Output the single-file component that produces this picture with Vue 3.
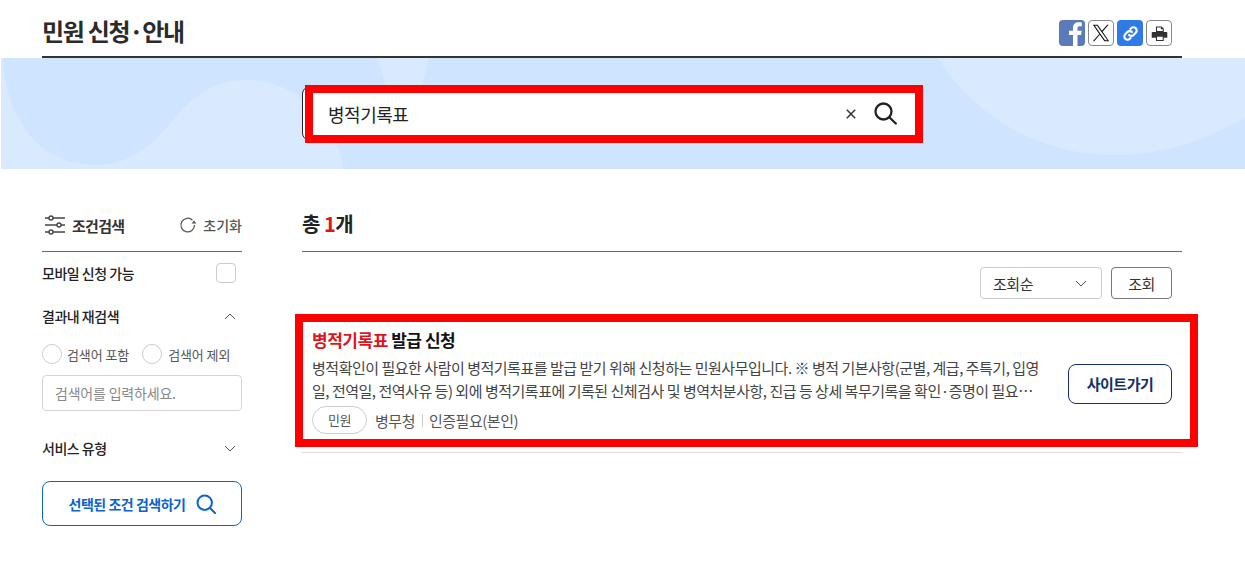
<template>
  <div class="page">
    <div class="head">
      <h1 class="page-title">민원 신청·안내</h1>
      <div class="share">
        <a class="share-btn fb">
          <svg viewBox="0 0 26 26"><path fill="#fff" d="M14 26V15h-4v-4.300h4V8c0-3.900 2.300-5.800 5.600-5.800 1.500 0 2.800.1 3.200.2v3.800h-2.200c-1.800 0-2.100.8-2.100 2.100v2.400h4.200l-.6 4.300h-3.600v11z"/></svg>
        </a>
        <a class="share-btn line">
          <svg viewBox="0 0 24 24"><path fill="#111" d="M13.900 10.500 21.200 2h-1.700l-6.400 7.400L8 2H2.200l7.700 11.200L2.200 22h1.700l6.700-7.800L16 22h5.800zm-2.400 2.700-.8-1.100L4.600 3.300h2.700l5 7.100.8 1.100 6.500 9.300h-2.700z"/></svg>
        </a>
        <a class="share-btn link">
          <svg class="small" viewBox="0 0 24 24" fill="none" stroke="#fff" stroke-width="3" stroke-linecap="round"><path d="M10 14a4.500 4.500 0 0 0 6.400 0l3-3a4.500 4.500 0 0 0-6.400-6.400l-1.200 1.200"/><path d="M14 10a4.500 4.500 0 0 0-6.400 0l-3 3a4.500 4.500 0 0 0 6.400 6.400l1.200-1.200"/></svg>
        </a>
        <a class="share-btn line">
          <svg class="small" viewBox="0 0 24 24"><path fill="#333" d="M7 2h8l3 3v5H7zm1.500 1.500v5h8V6H14V3.500zM2 10h20a1 1 0 0 1 1 1v7h-5v-3H7v3H1v-7a1 1 0 0 1 1-1zm6.500 6.500h8V21h-8zM7 15v7.500h11V15z"/></svg>
        </a>
      </div>
    </div>

    <div class="hero">
      <svg class="hero-bg" viewBox="0 0 1244 111" preserveAspectRatio="none">
        <path fill="#cfe5ff" d="M0 0H1244V111H0Z"/>
        <path fill="#d9eaff" d="M2 0C4 50 30 107 95 107C130 107 155 85 174 60C192 38 215 22 245 22C290 22 325 55 336 85C339 94 341 103 342 111H0V0Z"/>
        <path fill="#d9eaff" d="M376 0H428C424 15 420 30 416 50H388C386 30 382 15 376 0Z"/>
        <path fill="#d9eaff" d="M937 0C975 60 1040 97 1113 97C1165 97 1210 80 1244 59V0Z"/>
      </svg>
      <div class="search">
        <input class="search-input" value="병적기록표" />
        <svg class="clear" viewBox="0 0 10 10" fill="none" stroke="#333" stroke-width="1.500"><path d="m.8.8 8.400 8.400M9.200.8.8 9.200"/></svg>
        <svg class="search-icon" viewBox="0 0 23 23" fill="none" stroke="#222" stroke-width="2.300" stroke-linecap="round">
          <circle cx="9.500" cy="9.500" r="8"/><path d="m15.500 15.500 6.300 6"/>
        </svg>
        <div class="mark mark-search"></div>
      </div>
    </div>

    <div class="body">
      <aside class="side">
        <div class="side-head">
          <svg class="filter-icon" viewBox="0 0 20 20" fill="none" stroke="#444" stroke-width="1.400">
            <path d="M0 3h4M8 3h12M0 10h12M16 10h4M0 17h4M8 17h12"/>
            <circle cx="6" cy="3" r="2"/><circle cx="14" cy="10" r="2"/><circle cx="6" cy="17" r="2"/>
          </svg>
          <span class="side-title">조건검색</span>
          <svg class="reset-icon" viewBox="0 0 18 18" fill="none" stroke="#555" stroke-width="1.300">
            <path d="M15.500 9a6.800 6.800 0 1 1-2-4.800"/><path fill="#555" stroke="none" d="M12.500 7.500h5l-2.500-3z"/>
          </svg>
          <span class="reset">초기화</span>
        </div>

        <div class="row mobile">
          <span class="row-label">모바일 신청 가능</span>
          <span class="check"></span>
        </div>

        <div class="row research">
          <span class="row-label">결과내 재검색</span>
          <svg class="chev" viewBox="0 0 12 7" fill="none" stroke="#555" stroke-width="1"><path d="m1 6 5-5 5 5"/></svg>
        </div>
        <div class="radios">
          <label class="radio"><span class="dot"></span>검색어 포함</label>
          <label class="radio"><span class="dot"></span>검색어 제외</label>
        </div>
        <input class="keyword" placeholder="검색어를 입력하세요." />

        <div class="row service">
          <span class="row-label">서비스 유형</span>
          <svg class="chev" viewBox="0 0 12 7" fill="none" stroke="#555" stroke-width="1"><path d="m1 1 5 5 5-5"/></svg>
        </div>

        <button class="apply">
          선택된 조건 검색하기
          <svg viewBox="0 0 20 20" fill="none" stroke="#0b63ce" stroke-width="2" stroke-linecap="round">
            <circle cx="8.700" cy="8.700" r="7.200"/><path d="m14 14 5 5"/>
          </svg>
        </button>
      </aside>

      <main class="main">
        <div class="total">총 <em>1</em>개</div>
        <div class="sort">
          <div class="select">
            <span>조회순</span>
            <svg class="chev" viewBox="0 0 12 7" fill="none" stroke="#555" stroke-width="1"><path d="m1 1 5 5 5-5"/></svg>
          </div>
          <button class="query">조회</button>
        </div>

        <div class="result">
          <div class="mark mark-result"></div>
          <div class="result-text">
            <div class="result-title"><em>병적기록표</em> 발급 신청</div>
            <p class="desc">병적확인이 필요한 사람이 병적기록표를 발급 받기 위해 신청하는 민원사무입니다. ※ 병적 기본사항(군별, 계급, 주특기, 입영일, 전역일, 전역사유 등) 외에 병적기록표에 기록된 신체검사 및 병역처분사항, 진급 등 상세 복무기록을 확인·증명이 필요한 경우 신청합니다.</p>
            <div class="meta">
              <span class="tag">민원</span>
              <span class="org">병무청</span>
              <span class="auth">인증필요(본인)</span>
            </div>
          </div>
          <a class="go">사이트가기</a>
        </div>
      </main>
    </div>
  </div>
</template>

<script setup>
</script>

<style>
html, body {
  margin: 0;
  background: #fff;
}
</style>

<style scoped>
.page {
  height: 566px;
  overflow: hidden;
  font-family: "Noto Sans CJK KR", "Noto Sans", sans-serif;
  letter-spacing: -.03em;
  color: #222;
}

.head {
  display: flex;
  justify-content: space-between;
  align-items: center;
  box-sizing: border-box;
  width: 1140px;
  height: 58px;
  margin-left: 42px;
  padding-bottom: 2px;
  border-bottom: 2px solid #333;
}

.page-title {
  margin: 8px 0 0;
  font-size: 24px;
  font-weight: 700;
  letter-spacing: -1.3px;
  line-height: 34px;
  color: #2b2b2b;
}

.share {
  display: flex;
  gap: 3px;
  margin: 12px 10px 0 0;
}

.share-btn {
  display: flex;
  align-items: center;
  justify-content: center;
  box-sizing: border-box;
  width: 26px;
  height: 26px;
  border-radius: 4px;
}

.share-btn svg {
  width: 20px;
  height: 20px;
}

.share-btn svg.small {
  width: 17px;
  height: 17px;
}

.fb {
  background: #5a7ab8;
  align-items: flex-end;
  overflow: hidden;
}

.fb svg {
  width: 26px;
  height: 26px;
}

.line {
  border: 1px solid #888;
}

.link {
  background: #2f7be5;
}

.hero {
  position: relative;
  display: flex;
  box-sizing: border-box;
  height: 111px;
  margin-left: 1px;
  padding: 28px 0 0 301px;
}

.hero-bg {
  position: absolute;
  inset: 0;
  width: 100%;
  height: 100%;
}

.search {
  position: relative;
  display: flex;
  align-items: center;
  box-sizing: border-box;
  width: 620px;
  height: 55px;
  padding: 0 24px 0 25px;
  background: #fff;
  border: 1px solid #222;
  border-radius: 8px;
}

.search-input {
  flex: 1;
  min-width: 0;
  border: 0;
  outline: 0;
  padding: 0;
  background: transparent;
  font-family: inherit;
  font-size: 18px;
  letter-spacing: inherit;
  color: #222;
}

.clear {
  width: 10px;
  height: 10px;
  margin-right: 18px;
}

.search-icon {
  width: 23px;
  height: 23px;
}

.mark {
  position: absolute;
  box-sizing: border-box;
  border: 8px solid #f00;
  pointer-events: none;
}

.mark-search {
  left: 2px;
  top: -2px;
  width: 618px;
  height: 58px;
}

.body {
  display: flex;
  gap: 60px;
  margin-left: 42px;
  width: 1140px;
}

.side {
  flex: none;
  width: 200px;
  padding-top: 42px;
}

.side-head {
  display: flex;
  align-items: center;
  box-sizing: border-box;
  height: 41px;
  padding-bottom: 12px;
  border-bottom: 1px solid #666;
}

.filter-icon {
  width: 20px;
  height: 20px;
  margin: 0 7px 0 3px;
}

.side-title {
  flex: 1;
  font-size: 15px;
  font-weight: 700;
  letter-spacing: -.7px;
  color: #333;
}

.reset-icon {
  width: 18px;
  height: 18px;
  margin-right: 6px;
}

.reset {
  font-size: 14px;
  font-weight: 500;
  letter-spacing: 0;
  color: #555;
}

.row {
  display: flex;
  align-items: center;
  justify-content: space-between;
  height: 20px;
}

.row-label {
  font-size: 14px;
  font-weight: 500;
  color: #222;
}

.mobile {
  margin-top: 11px;
  padding-right: 6px;
}

.check {
  box-sizing: border-box;
  width: 20px;
  height: 20px;
  border: 1px solid #ccc;
  border-radius: 4px;
}

.research {
  margin-top: 23px;
  padding-right: 6px;
}

.chev {
  width: 12px;
  height: 7px;
}

.radios {
  display: flex;
  gap: 13px;
  margin-top: 18px;
}

.radio {
  display: flex;
  align-items: center;
  gap: 5px;
  font-size: 13px;
  letter-spacing: -.1px;
  color: #555;
}

.radio + .radio {
  gap: 6px;
}

.dot {
  box-sizing: border-box;
  width: 20px;
  height: 20px;
  border: 1px solid #ccc;
  border-radius: 50%;
}

.keyword {
  display: block;
  box-sizing: border-box;
  width: 200px;
  height: 36px;
  margin-top: 11px;
  padding: 0 12px;
  border: 1px solid #d5d5d5;
  border-radius: 4px;
  font-family: inherit;
  font-size: 14px;
  letter-spacing: -.2px;
  outline: 0;
}

.keyword::placeholder {
  color: #888;
}

.service {
  margin-top: 27px;
  padding-right: 6px;
}

.apply {
  display: flex;
  align-items: center;
  justify-content: center;
  gap: 10px;
  box-sizing: border-box;
  width: 200px;
  height: 45px;
  margin-top: 23px;
  background: #fff;
  border: 1px solid #0b63ce;
  border-radius: 8px;
  font-family: inherit;
  font-size: 14px;
  font-weight: 700;
  letter-spacing: inherit;
  color: #0b63ce;
}

.apply svg {
  width: 20px;
  height: 20px;
}

.main {
  flex: 1;
  min-width: 0;
  padding-top: 42px;
}

.total {
  height: 40px;
  line-height: 26px;
  border-bottom: 1px solid #666;
  font-size: 20px;
  font-weight: 700;
  color: #222;
}

.total em {
  font-style: normal;
  color: #e0141c;
}

.sort {
  display: flex;
  justify-content: flex-end;
  gap: 9px;
  margin-top: 15px;
  padding-right: 10px;
}

.select {
  display: flex;
  align-items: center;
  justify-content: space-between;
  box-sizing: border-box;
  width: 122px;
  height: 32px;
  padding: 0 14px 0 12px;
  border: 1px solid #ccc;
  border-radius: 4px;
  font-size: 15px;
  color: #333;
}

.query {
  box-sizing: border-box;
  width: 61px;
  height: 32px;
  background: #fff;
  border: 1px solid #777;
  border-radius: 4px;
  font-family: inherit;
  font-size: 15px;
  letter-spacing: inherit;
  color: #333;
}

.result {
  position: relative;
  display: flex;
  align-items: center;
  box-sizing: border-box;
  height: 136px;
  margin-top: 18px;
  padding: 0 10px;
  border-bottom: 1px solid #ddd;
}

.mark-result {
  left: -7px;
  top: -3px;
  width: 903px;
  height: 133px;
}

.result-text {
  flex: none;
  width: 730px;
  margin-bottom: 8px;
}

.result-title {
  font-size: 17px;
  font-weight: 700;
  line-height: 26px;
  color: #111;
}

.result-title em {
  font-style: normal;
  color: #e0141c;
}

.desc {
  display: -webkit-box;
  -webkit-box-orient: vertical;
  -webkit-line-clamp: 2;
  overflow: hidden;
  margin: 3px 0 0;
  font-size: 15px;
  line-height: 23px;
  color: #444;
}

.meta {
  display: flex;
  align-items: center;
  margin-top: 4px;
  font-size: 15px;
  color: #555;
}

.tag {
  box-sizing: border-box;
  width: 55px;
  height: 28px;
  margin-right: 8px;
  border: 1px solid #ccc;
  border-radius: 14px;
  font-size: 13px;
  line-height: 26px;
  text-align: center;
}

.org {
  padding-right: 8px;
  margin-right: 6px;
  background: linear-gradient(#ccc, #ccc) right center / 1px 13px no-repeat;
}

.go {
  display: flex;
  align-items: center;
  justify-content: center;
  box-sizing: border-box;
  width: 104px;
  height: 40px;
  margin: 0 0 2px auto;
  border: 1px solid #12306e;
  border-radius: 8px;
  font-size: 15px;
  font-weight: 700;
  color: #12306e;
}
</style>
